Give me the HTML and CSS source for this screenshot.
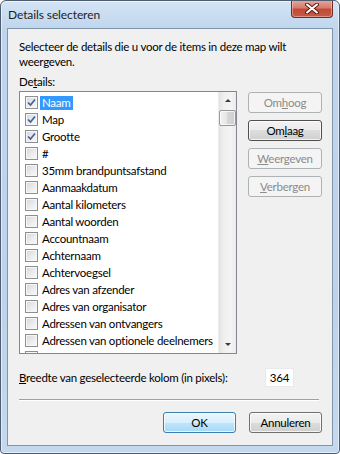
FILE: index.html
```html
<!DOCTYPE html>
<html lang="nl">
<head>
    <meta charset="UTF-8">
    <meta name="viewport" content="width=device-width, initial-scale=1.0">
    <title>Details selecteren</title>
    <link rel="stylesheet" href="styles.css">
</head>
<body>
    <div class="window">
        <div class="titlebar">
            <span class="title">Details selecteren</span>
            <div class="close">
                <svg width="14" height="11" viewBox="0 0 14 11">
                    <path d="M2 1.5 L12 9.5 M12 1.5 L2 9.5" stroke="#5a2018" stroke-width="4" stroke-linecap="round"/>
                    <path d="M2 1.5 L12 9.5 M12 1.5 L2 9.5" stroke="#ffffff" stroke-width="2" stroke-linecap="round"/>
                </svg>
            </div>
        </div>

        <div class="client">
            <p class="intro">Selecteer de details die u voor de items in deze map wilt weergeven.</p>
            <div class="label">De<u>t</u>ails:</div>

            <div class="main">
                <div class="list">
                    <ul class="items">
                        <li><span class="cb checked"><svg width="11" height="11" viewBox="0 0 11 11"><path d="M2 5.5 L4.5 8 L9 2.5" fill="none" stroke="#4b5e96" stroke-width="1.7"/></svg></span><span class="name sel">Naam</span></li>
                        <li><span class="cb checked"><svg width="11" height="11" viewBox="0 0 11 11"><path d="M2 5.5 L4.5 8 L9 2.5" fill="none" stroke="#4b5e96" stroke-width="1.7"/></svg></span><span class="name">Map</span></li>
                        <li><span class="cb checked"><svg width="11" height="11" viewBox="0 0 11 11"><path d="M2 5.5 L4.5 8 L9 2.5" fill="none" stroke="#4b5e96" stroke-width="1.7"/></svg></span><span class="name">Grootte</span></li>
                        <li><span class="cb"></span><span class="name">#</span></li>
                        <li><span class="cb"></span><span class="name">35mm brandpuntsafstand</span></li>
                        <li><span class="cb"></span><span class="name">Aanmaakdatum</span></li>
                        <li><span class="cb"></span><span class="name">Aantal kilometers</span></li>
                        <li><span class="cb"></span><span class="name">Aantal woorden</span></li>
                        <li><span class="cb"></span><span class="name">Accountnaam</span></li>
                        <li><span class="cb"></span><span class="name">Achternaam</span></li>
                        <li><span class="cb"></span><span class="name">Achtervoegsel</span></li>
                        <li><span class="cb"></span><span class="name">Adres van afzender</span></li>
                        <li><span class="cb"></span><span class="name">Adres van organisator</span></li>
                        <li><span class="cb"></span><span class="name">Adressen van ontvangers</span></li>
                        <li><span class="cb"></span><span class="name">Adressen van optionele deelnemers</span></li>
                        <li><span class="cb"></span></li>
                    </ul>
                    <div class="scrollbar">
                        <div class="sb-btn"><span class="arrow-up"></span></div>
                        <div class="thumb"></div>
                        <div class="track"></div>
                        <div class="sb-btn"><span class="arrow-down"></span></div>
                    </div>
                </div>

                <div class="side">
                    <button disabled>Om<u>h</u>oog</button>
                    <button class="focus">Om<u>l</u>aag</button>
                    <button disabled><u>W</u>eergeven</button>
                    <button disabled><u>V</u>erbergen</button>
                </div>
            </div>

            <div class="width-row">
                <span><u>B</u>reedte van geselecteerde kolom (in pixels):</span>
                <span class="num">364</span>
            </div>

            <div class="sep"></div>

            <div class="actions">
                <button class="default">OK</button>
                <button>Annuleren</button>
            </div>
        </div>
    </div>
</body>
</html>
```

FILE: styles.css
```css
body {
    margin: 0;
    font-family: Lato, "Noto Sans", sans-serif;
    font-size: 11.5px;
    letter-spacing: -0.25px;
    color: #000;
}
.window {
    position: relative;
    width: 340px;
    height: 454px;
    box-sizing: border-box;
    border: 1px solid #4e5e70;
    border-radius: 6px 6px 4px 4px;
    background: linear-gradient(to bottom, #d3e3f4 0px, #bed5ed 30px, #bcd3eb 300px, #c4d9ef 454px);
    box-shadow: inset 0 0 0 1px rgba(255, 255, 255, 0.55);
    overflow: hidden;
}
.titlebar {
    height: 27px;
    padding-left: 7px;
    display: flex;
    align-items: center;
}
.title {
    font-size: 12px;
    letter-spacing: -0.1px;
    color: #1e1e1e;
}
.close {
    position: absolute;
    top: -1px;
    right: 6px;
    width: 42px;
    height: 18px;
    box-sizing: border-box;
    border: 1px solid #6e2b22;
    border-top: none;
    border-radius: 0 0 4px 4px;
    background: linear-gradient(to bottom, #e8aa9f 0%, #d77b6c 45%, #c24a38 55%, #c65a46 100%);
    box-shadow: inset 0 0 0 1px rgba(255, 220, 210, 0.45);
    display: flex;
    align-items: center;
    justify-content: center;
}
.client {
    margin: 0 6px;
    height: 418px;
    box-sizing: border-box;
    border: 1px solid #8196ab;
    background: #f0f0f0;
    padding: 10px 10px 0 11px;
}
.intro {
    margin: 0;
    line-height: 15px;
}
.label {
    margin-top: 5px;
    line-height: 15px;
}
.main {
    display: flex;
    align-items: flex-start;
    margin-top: 2px;
}
.list {
    width: 218px;
    height: 263px;
    box-sizing: border-box;
    border: 1px solid #828790;
    background: #fff;
    display: flex;
    overflow: hidden;
}
.items {
    flex: 1;
    list-style: none;
    margin: 0;
    padding: 2px 0 0 5px;
    overflow: hidden;
}
.items li {
    height: 17px;
    display: flex;
    align-items: center;
    white-space: nowrap;
}
.cb {
    width: 13px;
    height: 13px;
    flex: none;
    box-sizing: border-box;
    border: 1px solid #8e8f8f;
    background: linear-gradient(135deg, #d4d7db 0%, #eceef0 60%, #f8f8f8 100%);
    box-shadow: inset 0 0 0 1px #f6f6f6;
    display: flex;
    align-items: center;
    justify-content: center;
}
.name {
    margin-left: 2px;
    padding: 0 2px;
    line-height: 14px;
}
.name.sel {
    background: #3399ff;
    color: #fff;
}
.scrollbar {
    width: 17px;
    flex: none;
    display: flex;
    flex-direction: column;
    background: linear-gradient(to right, #e3e3e3, #f0f0f0 30%, #f4f4f4 70%, #ebebeb);
    border-left: 1px solid #ececec;
}
.sb-btn {
    height: 17px;
    flex: none;
    display: flex;
    align-items: center;
    justify-content: center;
}
.arrow-up {
    width: 0;
    height: 0;
    border-left: 3px solid transparent;
    border-right: 3px solid transparent;
    border-bottom: 3px solid #3b3b3b;
}
.arrow-down {
    width: 0;
    height: 0;
    border-left: 3px solid transparent;
    border-right: 3px solid transparent;
    border-top: 3px solid #3b3b3b;
}
.thumb {
    height: 16px;
    flex: none;
    margin: 1px 0 0 0;
    box-sizing: border-box;
    border: 1px solid #989898;
    border-radius: 2px;
    background: linear-gradient(to right, #f2f2f2, #e4e4e4 50%, #d6d6d6 50%, #cfcfcf);
    box-shadow: inset 0 0 0 1px rgba(255, 255, 255, 0.7);
}
.track {
    flex: 1;
}
.side {
    margin-left: 11px;
    margin-top: 1px;
    width: 74px;
    display: flex;
    flex-direction: column;
    gap: 7px;
}
button {
    font-family: inherit;
    font-size: 11.5px;
    letter-spacing: -0.25px;
    width: 74px;
    height: 21px;
    padding: 0;
    color: #000;
    border: 1px solid #707070;
    border-radius: 3px;
    background: linear-gradient(to bottom, #f2f2f2 0%, #ebebeb 50%, #dddddd 50%, #cfcfcf 100%);
    box-shadow: inset 0 0 0 1px rgba(255, 255, 255, 0.75);
}
button:disabled {
    color: #8b8b8b;
    border-color: #adb2b5;
    background: #f4f4f4;
    box-shadow: none;
}
button.focus {
    border-color: #4f4f4f;
}
button.default {
    border-color: #3c7fb1;
    background: linear-gradient(to bottom, #eaf6fd 0%, #d9f0fc 50%, #bee6fd 50%, #a7d9f5 100%);
}
.width-row {
    margin-top: 14px;
    height: 19px;
    display: flex;
    align-items: center;
}
.num {
    margin-left: auto;
    margin-right: 28px;
    width: 29px;
    height: 19px;
    box-sizing: border-box;
    border: 1px solid #e6eaee;
    background: #fff;
    text-align: center;
    line-height: 17px;
}
.sep {
    margin-top: 12px;
    margin-right: 3px;
    border-top: 1px solid #a0a0a0;
    border-bottom: 1px solid #fff;
}
.actions {
    margin-top: 11px;
    display: flex;
    justify-content: flex-end;
    gap: 13px;
}
.actions button {
    width: 73px;
}
```
